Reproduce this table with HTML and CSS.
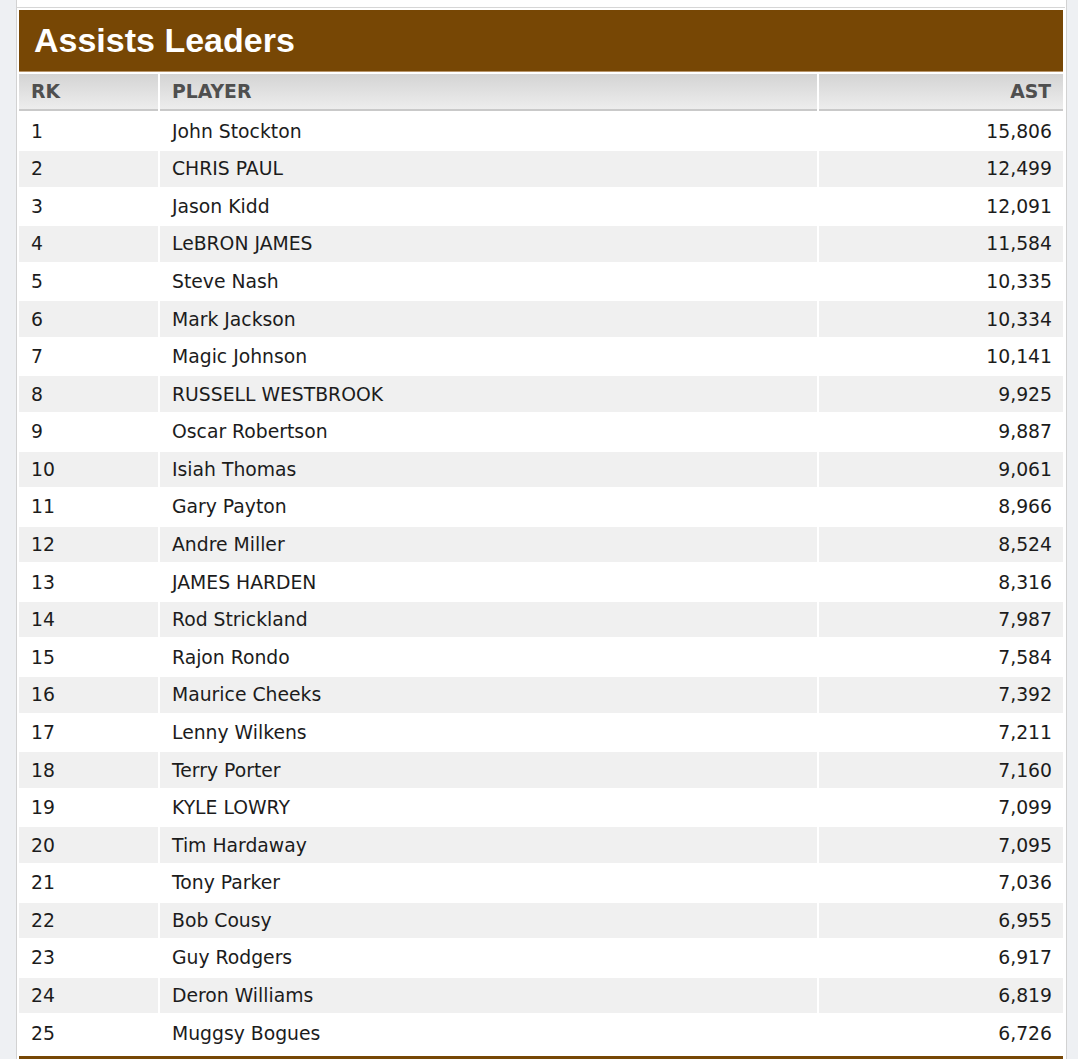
FILE: index.html
```html
<!DOCTYPE html>
<html lang="en">
<head>
<meta charset="utf-8">
<title>Assists Leaders</title>
<link rel="stylesheet" href="styles.css">
</head>
<body>
<div class="card">
  <table class="leaders">
    <colgroup>
      <col class="col-rk">
      <col class="col-player">
      <col class="col-ast">
    </colgroup>
    <thead>
      <tr><th colspan="3" class="title">Assists Leaders</th></tr>
      <tr class="cols"><th class="rk">RK</th><th class="player">PLAYER</th><th class="ast">AST</th></tr>
    </thead>
    <tbody>
      <tr><td class="rk">1</td><td class="player">John Stockton</td><td class="ast">15,806</td></tr>
      <tr><td class="rk">2</td><td class="player">CHRIS PAUL</td><td class="ast">12,499</td></tr>
      <tr><td class="rk">3</td><td class="player">Jason Kidd</td><td class="ast">12,091</td></tr>
      <tr><td class="rk">4</td><td class="player">LeBRON JAMES</td><td class="ast">11,584</td></tr>
      <tr><td class="rk">5</td><td class="player">Steve Nash</td><td class="ast">10,335</td></tr>
      <tr><td class="rk">6</td><td class="player">Mark Jackson</td><td class="ast">10,334</td></tr>
      <tr><td class="rk">7</td><td class="player">Magic Johnson</td><td class="ast">10,141</td></tr>
      <tr><td class="rk">8</td><td class="player">RUSSELL WESTBROOK</td><td class="ast">9,925</td></tr>
      <tr><td class="rk">9</td><td class="player">Oscar Robertson</td><td class="ast">9,887</td></tr>
      <tr><td class="rk">10</td><td class="player">Isiah Thomas</td><td class="ast">9,061</td></tr>
      <tr><td class="rk">11</td><td class="player">Gary Payton</td><td class="ast">8,966</td></tr>
      <tr><td class="rk">12</td><td class="player">Andre Miller</td><td class="ast">8,524</td></tr>
      <tr><td class="rk">13</td><td class="player">JAMES HARDEN</td><td class="ast">8,316</td></tr>
      <tr><td class="rk">14</td><td class="player">Rod Strickland</td><td class="ast">7,987</td></tr>
      <tr><td class="rk">15</td><td class="player">Rajon Rondo</td><td class="ast">7,584</td></tr>
      <tr><td class="rk">16</td><td class="player">Maurice Cheeks</td><td class="ast">7,392</td></tr>
      <tr><td class="rk">17</td><td class="player">Lenny Wilkens</td><td class="ast">7,211</td></tr>
      <tr><td class="rk">18</td><td class="player">Terry Porter</td><td class="ast">7,160</td></tr>
      <tr><td class="rk">19</td><td class="player">KYLE LOWRY</td><td class="ast">7,099</td></tr>
      <tr><td class="rk">20</td><td class="player">Tim Hardaway</td><td class="ast">7,095</td></tr>
      <tr><td class="rk">21</td><td class="player">Tony Parker</td><td class="ast">7,036</td></tr>
      <tr><td class="rk">22</td><td class="player">Bob Cousy</td><td class="ast">6,955</td></tr>
      <tr><td class="rk">23</td><td class="player">Guy Rodgers</td><td class="ast">6,917</td></tr>
      <tr><td class="rk">24</td><td class="player">Deron Williams</td><td class="ast">6,819</td></tr>
      <tr><td class="rk">25</td><td class="player">Muggsy Bogues</td><td class="ast">6,726</td></tr>
    </tbody>
    <tfoot>
      <tr><td colspan="3" class="foot"></td></tr>
    </tfoot>
  </table>
</div>
</body>
</html>
```
FILE: styles.css
```css
html, body {
  margin: 0;
  padding: 0;
  overflow: hidden;
  background: #eef0f3;
}

.card {
  margin: 0 11px 0 16px;
  padding: 7px 1px 0 0;
  background: #ffffff;
  border-left: 1px solid #d2d2d2;
  border-right: 1px solid #d2d2d2;
}

.leaders {
  width: 100%;
  border-collapse: separate;
  border-spacing: 2px;
  border-top: 1px solid #d6d6d6;
  font-family: "DejaVu Sans", Verdana, sans-serif;
  table-layout: fixed;
}

.col-rk {
  width: 139px;
}

.col-ast {
  width: 244px;
}

.leaders th,
.leaders td {
  box-sizing: border-box;
  padding: 0 12px;
  white-space: nowrap;
}

.title {
  height: 62px;
  padding: 0 15px !important;
  background: #774705;
  border-bottom: 1px solid #b8956a;
  color: #ffffff;
  font-family: "Liberation Sans", Arial, sans-serif;
  font-size: 34px;
  font-weight: 700;
  text-align: left;
  vertical-align: middle;
}

.cols th {
  height: 37.4px;
  background: linear-gradient(to bottom, #d4d4d4, #ededed);
  border-bottom: 2px solid #c9c9c9;
  color: #4f4f4f;
  font-size: 18.8px;
  font-weight: 700;
  text-align: left;
}

.cols th.ast {
  text-align: right;
}

tbody td {
  height: 35.59px;
  color: #1c1c1c;
  font-size: 18.8px;
  text-align: left;
}

tbody td.ast {
  text-align: right;
  padding-right: 11px;
}

tbody tr:nth-child(even) td {
  background: #f0f0f0;
}

.foot {
  height: 12px;
  background: #774705;
  border-top: 3px solid #ffffff;
}
```
